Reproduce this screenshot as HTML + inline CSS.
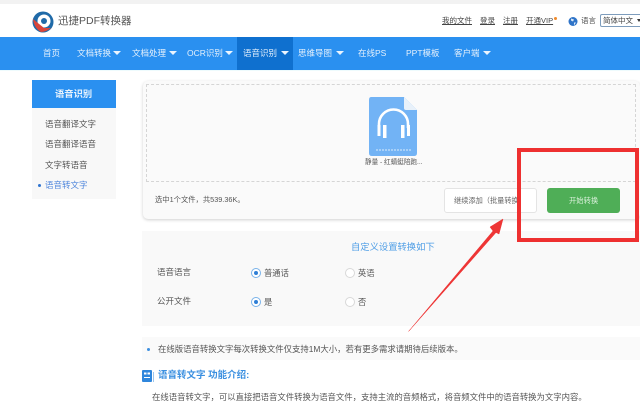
<!DOCTYPE html>
<html><head><meta charset="utf-8"><style>
html,body{margin:0;padding:0;background:#fff;width:640px;height:403px;overflow:hidden}
body{position:relative;font-family:"Liberation Sans","Noto Sans CJK SC",sans-serif;color:#444}
.a{position:absolute;white-space:nowrap}
.t{position:absolute;white-space:nowrap;line-height:14px;filter:blur(.3px)}
.n{color:#e4f0fc;font-size:8.5px;top:46px}
.c{position:absolute;width:0;height:0;border-left:4px solid transparent;border-right:4px solid transparent;border-top:4px solid #eaf4fe;top:51px}
.u{font-size:7.5px;top:14px;color:#444;text-decoration:underline}
.s{font-size:8.5px;left:45px;color:#555}
.r{position:absolute;width:8px;height:8px;border-radius:50%;border:1px solid #d8d8d8;background:#fff}
.r.on{border-color:#7ab3ea}
.r.on:after{content:"";position:absolute;left:2px;top:2px;width:4px;height:4px;border-radius:50%;background:#2f7fd6}
.l{font-size:8.3px;color:#555}
</style></head><body>
<div class="a" style="left:0;top:0;width:640px;height:4px;background:#f2f2f2"></div>

<svg class="a" style="left:32px;top:11px" width="22" height="22" viewBox="0 0 22 22">
<circle cx="11" cy="11" r="10.5" fill="#1f6aa8"/>
<circle cx="12" cy="10" r="6.5" fill="#fff"/>
<circle cx="12" cy="10" r="3" fill="#1f6aa8"/>
<path d="M1 8 L12 17 L19 17 Q14 21 9 21 Q2 17 1 8Z" fill="#d8453a"/>
</svg>
<div class="t" style="left:58px;top:14px;font-size:10.5px;color:#555">迅捷PDF转换器</div>

<span class="t u" style="left:442px">我的文件</span>
<span class="t u" style="left:480px">登录</span>
<span class="t u" style="left:503px">注册</span>
<span class="t u" style="left:526px">开通VIP</span>
<div class="a" style="left:554px;top:17px;width:3px;height:3px;border-radius:50%;background:#f08a2c"></div>
<svg class="a" style="left:568px;top:16px" width="10" height="11" viewBox="0 0 10 10"><circle cx="5" cy="5" r="4.5" fill="#2f74c8"/><path d="M3 2 L6 3 L5 5 L3 4Z M6 6 L8 6 L6 9Z" fill="#dbe9f7"/></svg>
<span class="t" style="left:581px;top:14px;font-size:7.500px;color:#555">语言</span>
<div class="a" style="left:600px;top:14px;width:44px;height:13px;border:1px solid #7d9cbc;border-radius:2px;box-sizing:border-box;font-size:7.500px;line-height:12px;color:#444;padding-left:2px">简体中文</div>
<div class="a" style="left:637px;top:19px;width:0;height:0;border-left:2px solid transparent;border-right:2px solid transparent;border-top:3px solid #333"></div>

<div class="a" style="left:0;top:37px;width:640px;height:33px;background:#2a90f0"></div>
<div class="a" style="left:237px;top:37px;width:56px;height:33px;background:#0f70cf"></div>
<span class="t n" style="left:43px">首页</span>
<span class="t n" style="left:77px">文档转换</span><i class="c" style="left:113px"></i>
<span class="t n" style="left:132px">文档处理</span><i class="c" style="left:169px"></i>
<span class="t n" style="left:187px">OCR识别</span><i class="c" style="left:225px"></i>
<span class="t n" style="left:243px">语音识别</span><i class="c" style="left:281px"></i>
<span class="t n" style="left:298px">思维导图</span><i class="c" style="left:336px"></i>
<span class="t n" style="left:358px">在线PS</span>
<span class="t n" style="left:406px">PPT模板</span>
<span class="t n" style="left:454px">客户端</span><i class="c" style="left:483px"></i>
<div class="a" style="left:0;top:70px;width:640px;height:1px;background:#eefbfd"></div>

<div class="a" style="left:32px;top:80px;width:84px;height:119px;background:#f8f8f8"></div>
<div class="a" style="left:32px;top:80px;width:84px;height:28px;background:#2a90f0"></div>
<span class="t" style="left:55px;top:87px;font-size:9.300px;font-weight:bold;color:#e6f2fd">语音识别</span>
<span class="t s" style="top:117px">语音翻译文字</span>
<span class="t s" style="top:137px">语音翻译语音</span>
<span class="t s" style="top:158px">文字转语音</span>
<span class="t s" style="top:178px;color:#4f86dc">语音转文字</span>
<div class="a" style="left:38px;top:184px;width:3px;height:3px;border-radius:50%;background:#2f74d0"></div>

<div class="a" style="left:143px;top:81px;width:497px;height:138px;background:#fafafa;border-radius:5px;box-shadow:0 1px 3px #d0d0d0"></div>
<div class="a" style="left:146px;top:84px;width:490px;height:98px;box-sizing:border-box;border:1px dashed #d5d5d5"></div>
<svg class="a" style="left:368px;top:97px" width="50" height="60" viewBox="0 0 50 60">
<path d="M3 0H36L49 13V56Q49 59 46 59H4Q1 59 1 56V3Q1 0 3 0Z" fill="#72b3f5"/>
<path d="M36 0L49 13H38Q36 13 36 11Z" fill="#e8f1fa"/>
<path d="M11 31V27A14.500 14.500 0 0 1 40 27V31" fill="none" stroke="#fff" stroke-width="2.600"/>
<rect x="9.500" y="28" width="3" height="11" fill="#fff"/><rect x="15" y="28" width="3.500" height="13" fill="#fff"/>
<rect x="33" y="28" width="3.500" height="13" fill="#fff"/><rect x="39" y="28" width="3" height="11" fill="#fff"/>
<path d="M8 53H43" stroke="#dcecfb" stroke-width="1" stroke-dasharray="2 1"/>
</svg>
<span class="t" style="left:365px;top:156px;font-size:6.600px;color:#555">静量 - 红蜻蜓陪跑...</span>
<span class="t" style="left:155px;top:193px;font-size:7.300px;color:#555">选中1个文件，共539.36K。</span>
<div class="a" style="left:444px;top:188px;width:93px;height:25px;box-sizing:border-box;background:#fff;border:1px solid #e4e4e4;border-radius:3px"></div>
<span class="t" style="left:454px;top:194px;font-size:7.200px;color:#666">继续添加（批量转换）</span>
<div class="a" style="left:547px;top:188px;width:73px;height:25px;background:#4fae57;border-radius:3px"></div>
<span class="t" style="left:569px;top:194px;font-size:7.300px;color:#d9f0da">开始转换</span>

<div class="a" style="left:142px;top:231px;width:498px;height:95px;background:#f9f9f9"></div>
<span class="t" style="left:351px;top:240px;font-size:9.300px;color:#4f9ee6">自定义设置转换如下</span>
<span class="t l" style="left:157px;top:265px;font-size:8.500px">语音语言</span>
<span class="t l" style="left:157px;top:294px;font-size:8.500px">公开文件</span>
<i class="r on" style="left:251px;top:268px"></i><span class="t l" style="left:264px;top:266px">普通话</span>
<i class="r" style="left:345px;top:268px"></i><span class="t l" style="left:358px;top:266px">英语</span>
<i class="r on" style="left:251px;top:297px"></i><span class="t l" style="left:264px;top:295px">是</span>
<i class="r" style="left:345px;top:297px"></i><span class="t l" style="left:358px;top:295px">否</span>

<div class="a" style="left:142px;top:337px;width:498px;height:23px;background:#fafafa"></div>
<div class="a" style="left:147px;top:348px;width:3px;height:3px;border-radius:50%;background:#3d8fe0"></div>
<span class="t" style="left:158px;top:342px;font-size:8.400px;color:#555">在线版语音转换文字每次转换文件仅支持1M大小，若有更多需求请期待后续版本。</span>

<svg class="a" style="left:142px;top:370px" width="12" height="13" viewBox="0 0 12 13"><rect x="0" y="0" width="10" height="12" rx="1" fill="#2f86dc"/><rect x="2" y="2.500" width="2.500" height="2" fill="#fff"/><rect x="5.500" y="2.500" width="2.500" height="2" fill="#fff"/><rect x="2" y="7" width="6" height="1" fill="#fff"/><rect x="11" y="2" width="1" height="10" fill="#9cc6ee"/></svg>
<span class="t" style="left:158px;top:369px;font-size:9.500px;font-weight:bold;color:#3a8fe0">语音转文字 功能介绍:</span>
<span class="t" style="left:152px;top:390px;font-size:8.370px;color:#555">在线语音转文字，可以直接把语音文件转换为语音文件，支持主流的音频格式，将音频文件中的语音转换为文字内容。</span>

<div class="a" style="left:517px;top:148px;width:122px;height:94px;box-sizing:border-box;border:4px solid #ee3030"></div>
<svg class="a" style="left:400px;top:210px" width="110" height="125" viewBox="400 210 110 125">
<path d="M408.500 331.500 L493 231 L490 227 L503 219 L499 234 L496 232.500 Z" fill="#ee3535" stroke="#ee3535" stroke-width=".5"/>
</svg>
</body></html>
